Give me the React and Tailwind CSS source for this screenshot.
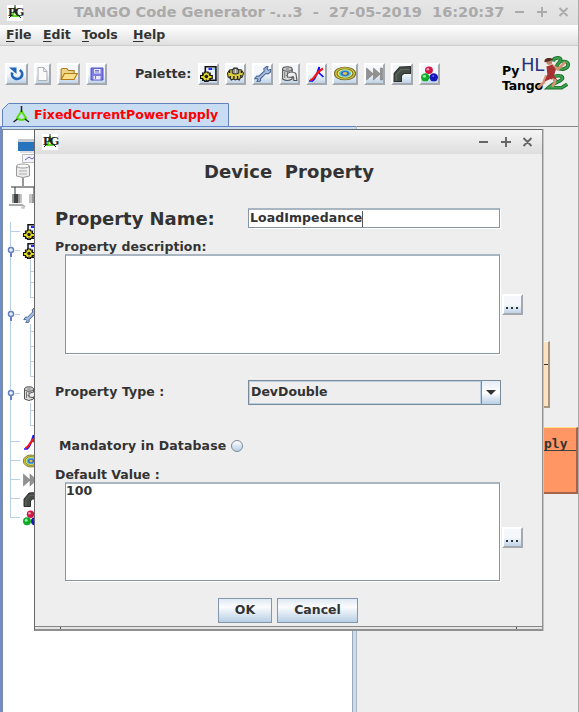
import React from "react";

const font = "font-['DejaVu_Sans','Verdana',sans-serif] font-bold";

function Gear({ x, y, s = 1 }) {
  return (
    <g transform={`translate(${x} ${y}) scale(${s})`}>
      <path d="M-5.5-1h2v-2.5h2v-1h3v1h2v2.500h2v3h-2v2h-2v1h-3v-1h-2v-2h-2z" fill="#e8dc28" stroke="#111" strokeWidth="1.200" />
      <path d="M-3 4.500v-2M0 5v-2M3 4v-2M-3-3v2M3-3v2" stroke="#222" strokeWidth="1.300" />
      <circle r="1.700" fill="#222" />
    </g>
  );
}

const drawings = {
  refresh: (
    <>
      <path d="M11 4a4.800 4.800 0 1 1-7 2.500" fill="none" stroke="#2264b8" strokeWidth="2.600" />
      <path d="M1 1.500h7v6.500z" fill="#2264b8" />
    </>
  ),
  file: <path d="M2.500 1.500h7l4 4v9h-11zM9.500 1.500v4h4" fill="#fafafa" stroke="#aaa" />,
  folder: (
    <>
      <path d="M1 13.500v-10l1-1h4l1.500 2h5v2.500" fill="#eed488" stroke="#b07b18" />
      <path d="M1 13.500l3-6h11.500l-3 6z" fill="#f9df87" stroke="#b07b18" />
    </>
  ),
  save: (
    <>
      <path d="M2 2h12v12H2z" fill="#7b7be0" stroke="#5252c0" />
      <path d="M5 3h6.500v4.500H5zM4.500 10h7v3.500h-7z" fill="#e9e9ff" />
      <path d="M6 4.500h4M6 6h4M6.500 10v3" stroke="#7777c8" />
    </>
  ),
  class: (
    <>
      <path d="M5 .8h10v13.500H5z" fill="#e9f0ff" stroke="#111" strokeWidth="1.500" />
      <path d="M8 3h3.500" stroke="#11f" strokeWidth="1.800" />
      <path d="M12.500 3h1.500" stroke="#0bb" />
      <Gear x={6} y={10.5} />
    </>
  ),
  gear: (
    <>
      <path d="M.5 7l2-3 3-.5 1-1.500h3l1 1.500 3 .5 2 3-1 4-2 1-1 2-2-1-1.500 1-2-1-2 1-1-2-2-1z" fill="#d9ca3e" stroke="#222" />
      <path d="M3 10v2.500M6.500 10v3M10 10v3M13 9v2.500M2.500 5v2M13.500 5v2" stroke="#222" strokeWidth="1.300" />
      <path d="M5 7V4q3-3 6 0v3q-3 2-6 0z" fill="#999" stroke="#333" />
      <path d="M8 3v4" stroke="#ddd" />
    </>
  ),
  wrench: (
    <path d="M.7 12.700l2-2.700 1.800.200L9.700 5l-.5-2.200L11.800.5l1.400.2-1 2.300 1.100 1.200L15.600 3.500v2.500l-2.300 2-2.100-.5L6 12.800l.2 2L4 16l-1.200-.5 1-2-1-1z" fill="#a3bce4" stroke="#4a668f" />
  ),
  cylinder: (
    <>
      <path d="M1.500 3v10q4.500 3 9 0V3" fill="#ddd" stroke="#555" />
      <ellipse cx="6" cy="3" rx="4.500" ry="2.200" fill="#ccc" stroke="#555" />
      <path d="M6 7.500q4.500-3 8 0l1 7h-3v-3q-1-2-2 0l-4-.5z" fill="#eee" stroke="#555" />
      <path d="M3.500 6v6M6 5.500v2M4.500 3h3M4.500 9.500h2" stroke="#777" />
    </>
  ),
  curve: (
    <>
      <path d="M1 15h3c4-3 5-10 6.500-14v6l4 4" fill="none" stroke="#11f" strokeWidth="1.700" />
      <path d="M2 14c2 0 3.500-2 5-4.500S10 5 14 2.500" fill="none" stroke="#f01818" strokeWidth="2.200" />
    </>
  ),
  rings: (
    <>
      <ellipse cx="8" cy="8" rx="7.700" ry="6" fill="#d6ca3c" stroke="#77722c" strokeWidth=".9" />
      <ellipse cx="8" cy="8" rx="5.800" ry="4.400" fill="#f1e86a" stroke="#77722c" strokeWidth=".8" />
      <ellipse cx="8" cy="8" rx="4.400" ry="3.300" fill="#48c5d5" />
      <ellipse cx="8" cy="8" rx="3" ry="2.300" fill="#3c63d5" />
      <ellipse cx="8" cy="8" rx="1.600" ry="1.300" fill="#d8c838" />
    </>
  ),
  forward: (
    <path d="M.5 2v12L7 8zM7 2v12L13.500 8zM13.500 2h2v12h-2z" fill="#929292" stroke="#7c7c7c" strokeWidth=".6" />
  ),
  pipe: (
    <>
      <path d="M1 15.500V8l5-6 9.500-.5v6.500H9.500L7.500 10v5.500z" fill="#454b45" stroke="#2c302c" />
      <path d="M3 15V9l4-4.500 8-.5" fill="none" stroke="#606660" />
    </>
  ),
  balls: (
    <>
      <circle cx="7.500" cy="4.200" r="3.700" fill="#d01848" />
      <circle cx="6.500" cy="3.200" r="1.300" fill="#f5a0b5" />
      <circle cx="4" cy="11.300" r="4" fill="#12a82a" />
      <circle cx="3.200" cy="10.200" r="1.500" fill="#8bf09a" />
      <circle cx="12" cy="11.300" r="4" fill="#1418b8" />
      <circle cx="11.500" cy="10" r="1" fill="#6868f0" />
    </>
  ),
};

function Icon({ name, className = "h-4 w-4" }) {
  return (
    <svg viewBox="0 0 16 16" preserveAspectRatio="none" className={`shrink-0 ${className}`}>
      {drawings[name]}
    </svg>
  );
}

const raised =
  "flex shrink-0 items-center justify-center border-2 border-t-white border-l-white border-r-[#a5a9ad] border-b-[#a5a9ad] bg-linear-to-b from-[#f4f8fc] via-[#f4f8fc] to-[#bfd3e8]";

function ToolButton({ name, className, icon = "h-4 w-[17px]" }) {
  return (
    <button className={`${raised} h-[22px] ${className}`}>
      <Icon name={name} className={icon} />
    </button>
  );
}

function AppIcon() {
  return (
    <div className="relative flex h-4 w-4 shrink-0 items-center justify-center bg-white">
      <svg viewBox="0 0 16 16" className="absolute inset-0">
        <path d="M8 2v3M5 11l3-6 3 6z" fill="none" stroke="#58dc20" strokeWidth="2.200" />
        <path d="M8 0v4M2 13l3-3M11 10l3 3" stroke="#222" />
      </svg>
      <span className="relative font-['DejaVu_Serif',serif] text-[11.500px] leading-none font-bold tracking-[-2px] text-[#222]">PG</span>
    </div>
  );
}

function WindowControls({ color }) {
  return (
    <svg viewBox="0 0 60 14" className="h-[14px] w-[60px] shrink-0" fill="none" stroke={color} strokeWidth="1.900">
      <path d="M4 7h9M26 7h10M31 2v10M48.500 3l8 8M56.500 3l-8 8" />
    </svg>
  );
}

function MenuItem({ label, className }) {
  return (
    <span className={`shrink-0 ${className}`}>
      <span className="underline underline-offset-2">{label[0]}</span>
      {label.slice(1)}
    </span>
  );
}

function TreeHandle() {
  return (
    <svg viewBox="0 0 8 12" className="-ml-[4px] h-3 w-2 shrink-0">
      <path d="M4 6v6" stroke="#6382bf" strokeWidth="2" />
      <circle cx="4" cy="5" r="2.500" fill="#eef4fb" stroke="#6382bf" strokeWidth="1.500" />
    </svg>
  );
}

function TreeRow({ name, handle }) {
  return (
    <div className="flex h-[19px] shrink-0 items-center">
      {handle ? <TreeHandle /> : <span className="h-px w-[4px] shrink-0 bg-[#b8cfe5]" />}
      <span className="h-px w-[5px] shrink-0 bg-[#b8cfe5]" />
      <Icon name={name} className="ml-[3px] h-4 w-4" />
    </div>
  );
}

function Branch({ rows, className }) {
  return (
    <div className={`flex flex-col pl-[19px] ${className}`}>
      {rows.map((h, i) => (
        <div key={i} className={`${h} w-4 shrink-0 border-b border-l border-[#b8cfe5]`} />
      ))}
    </div>
  );
}

function RootDrawing() {
  return (
    <svg viewBox="0 0 34 76" className="h-[76px] w-[34px]">
      <path d="M15 1h19v12H15z" fill="#2873bd" />
      <path d="M15 1h19v3H15z" fill="#c4c8d0" />
      <path d="M17 13h17v2H17z" fill="#ddd" />
      <path d="M19.500 16.500h14v8h-14z" fill="#f3f4ff" stroke="#bbb" />
      <path d="M22 22l4-3 3 2 4-3" fill="none" stroke="#5967b0" />
      <path d="M20 40v8M8 49h26M12 49v7M31 49v7" stroke="#333" />
      <path d="M13.500 28v10q6.500 3 13 0V28" fill="#eee" stroke="#999" />
      <ellipse cx="20" cy="28" rx="6.500" ry="2" fill="#fafafa" stroke="#999" />
      <path d="M16 33h8M16 36h8" stroke="#aaa" />
      <path d="M9 56h8v9H9zM28 56h6v9h-6z" fill="#999" />
      <path d="M11 56h4v9h-4z" fill="#444" />
      <path d="M17 56h2v9h-2zM26 56h3v9h-3z" fill="#c4c4c4" />
      <path d="M6 67h13l3 2" fill="none" stroke="#aaa" strokeWidth="2" />
      <ellipse cx="20" cy="69.500" rx="2" ry="1.500" fill="#ccc" />
    </svg>
  );
}

function Logo() {
  return (
    <div className="relative h-[42px] w-[76px]">
      <div className="absolute top-[10px] left-px text-[12.500px] leading-[15px] font-bold tracking-[-0.200px] text-black">
        Py<br />Tango
      </div>
      <span className="absolute top-[2px] left-[20px] text-[18px] leading-[20px] font-normal tracking-[-0.300px] text-[#26327c]">HL</span>
      <svg viewBox="0 0 36 42" preserveAspectRatio="none" className="absolute top-[3px] left-[36px] h-[37px] w-[34px]" fill="none">
        <path d="M17 6c1-5 9-5 8-1-1 3-6 5-3 8 4 4 11 1 11-3 0-4-5-5-7-2M14 25c5-3 13-4 13 0s-8 4-15 11h14l6-4" stroke="#1f6e2e" strokeWidth="4" />
        <path d="M17 6c1-5 9-5 8-1-1 3-6 5-3 8 4 4 11 1 11-3 0-4-5-5-7-2M14 25c5-3 13-4 13 0s-8 4-15 11h14l6-4" stroke="#38a34a" strokeWidth="2" />
        <path d="M15 10l7 5 8-8M10 22l-3 8-6 6M17 23l2 7-3 5" stroke="#d79275" strokeWidth="3" />
        <path d="M10 12l6-2 4 5-2 7 4 6-5-3-9 4 3-8z" fill="#a63032" />
        <circle cx="13" cy="7" r="3" fill="#c18268" />
        <path d="M8 7c-1-5 6-6 9-3l-4 2z" fill="#55291f" />
      </svg>
    </div>
  );
}

function TextArea({ children }) {
  return (
    <div className="w-[435px] border border-t-2 border-[#8795a3] border-t-[#a9b6c2] bg-white text-[12.500px] leading-[14px] shadow-[1px_1px_0_#fff]">
      {children}
    </div>
  );
}

function MoreButton() {
  return (
    <button className={`${raised} h-[21px] w-[21px]`}>
      <svg viewBox="0 0 17 17" className="h-[17px] w-[17px]">
        <path d="M2 11h2v2H2zM7 11h2v2H7zM12 11h2v2h-2z" fill="#333" />
      </svg>
    </button>
  );
}

const pushButton =
  "flex h-[25px] items-center justify-center border border-[#8297ac] bg-linear-to-b from-[#dfe9f3] via-[#fbfcfe] via-35% to-[#b8cfe5] text-[12.500px]";

function Dialog() {
  return (
    <div className="absolute top-[129px] left-[34px] flex h-[502px] w-[509px] flex-col border border-b-2 border-[#666] border-r-[#909090] border-b-[#909090] bg-[#eee] shadow-[1px_0_0_#c4c4c4]">
      <div className="flex h-[24px] shrink-0 items-center bg-linear-to-b from-[#f5f5f5] to-[#dedede] pl-[7px]">
        <AppIcon />
        <div className="mr-[7px] ml-auto">
          <WindowControls color="#666" />
        </div>
      </div>
      <div className="flex h-[35px] shrink-0 items-center pl-[169px] text-[18px] tracking-[0.050px] whitespace-pre">Device  Property</div>
      <div className="mt-[19px] flex h-[20px] shrink-0 items-center pl-[20px]">
        <span className="w-[193px] text-[18px] tracking-[-0.050px] whitespace-nowrap">Property Name:</span>
        <div className="flex h-[20px] w-[252px] items-center border border-t-2 border-[#8795a3] border-t-[#a9b6c2] bg-white pl-px text-[12.500px] tracking-[0.080px] shadow-[1px_1px_0_#fff]">
          LoadImpedance
          <span className="h-4 w-px bg-[#555]" />
        </div>
      </div>
      <div className="mt-[11px] flex h-4 shrink-0 items-center pl-[20px] text-[12.500px] tracking-[0.050px]">Property description:</div>
      <div className="-mt-px flex h-[100px] shrink-0 items-center pl-[30px]">
        <div className="mr-[2px] flex h-full"><TextArea /></div>
        <div className="mt-px"><MoreButton /></div>
      </div>
      <div className="mt-[26px] flex h-[25px] shrink-0 items-center pl-[20px]">
        <span className="w-[193px] text-[12.500px] tracking-[0.100px]">Property Type :</span>
        <div className="flex h-[25px] w-[253px] border border-[#7a8a99]">
          <div className="flex flex-1 items-center border border-[#b8cfe5] pl-px text-[12.500px]">DevDouble</div>
          <div className="flex w-[19px] items-center justify-center border-l border-[#7a8a99] bg-linear-to-b from-[#e4edf6] via-white to-[#b8cfe5]">
            <svg viewBox="0 0 10 5" className="h-[5px] w-[10px]"><path d="M0 0h10L5 5z" fill="#333" /></svg>
          </div>
        </div>
      </div>
      <div className="mt-[32px] flex h-[18px] shrink-0 items-center pl-[24px]">
        <span className="w-[172px] text-[12.500px] tracking-[0.140px] whitespace-nowrap">Mandatory in Database</span>
        <span className="h-3 w-3 rounded-full border border-[#7a8a99] bg-linear-to-b from-white to-[#b8cfe5]" />
      </div>
      <div className="mt-[12px] flex h-4 shrink-0 items-center pl-[20px] text-[12.500px]">Default Value :</div>
      <div className="-mt-px flex h-[99px] shrink-0 items-center pl-[30px]">
        <div className="mr-[2px] flex h-full"><TextArea>100</TextArea></div>
        <div className="mt-[12px]"><MoreButton /></div>
      </div>
      <div className="mt-[17px] flex shrink-0 gap-[5px] pl-[183px]">
        <button className={`${pushButton} w-[54px]`}>OK</button>
        <button className={`${pushButton} w-[81px]`}>Cancel</button>
      </div>
      <div className="mt-auto flex h-[3px] shrink-0 border-t border-[#888] bg-[#e4e4e4]">
        <span className="ml-[25px] w-px bg-[#555]" />
        <span className="mr-[25px] ml-auto w-px bg-[#555]" />
      </div>
    </div>
  );
}

export default function App() {
  return (
    <div className={`relative flex h-[712px] w-[579px] flex-col overflow-hidden border-r border-[#aaa] bg-[#eee] text-[#333] ${font}`}>
      <header className="flex h-[25px] shrink-0 items-center bg-linear-to-b from-[#e6e6e6] to-[#dedede] pl-[7px]">
        <AppIcon />
        <span className="-mt-px ml-[51px] text-[14.560px] whitespace-pre text-[#aaa]">TANGO Code Generator -...3  -  27-05-2019  16:20:37</span>
        <div className="-mt-[2px] mr-[7px] ml-auto shrink-0">
          <WindowControls color="#aaa" />
        </div>
      </header>
      <nav className="flex h-[21px] shrink-0 items-center border-b border-[#ccc] bg-linear-to-b from-white to-[#e0e0e0] pl-[6px] text-[12.500px]">
        <MenuItem label="File" className="w-[37px]" />
        <MenuItem label="Edit" className="w-[39px]" />
        <MenuItem label="Tools" className="w-[51px]" />
        <MenuItem label="Help" className="w-[40px]" />
      </nav>
      <div className="flex h-[55px] shrink-0 items-center pl-[5px]">
        <ToolButton name="refresh" className="mr-[6px] w-[23px]" />
        <ToolButton name="file" className="mr-[6px] w-[17px]" icon="h-4 w-[13px]" />
        <ToolButton name="folder" className="mr-[6px] w-[23px]" icon="h-4 w-[18px]" />
        <ToolButton name="save" className="w-[21px]" icon="h-4 w-4" />
        <span className="ml-[28px] w-[63px] shrink-0 text-[12.700px]">Palette:</span>
        <ToolButton name="class" className="mr-[6px] w-[21px]" />
        <ToolButton name="gear" className="mr-[6px] w-[21px]" />
        <ToolButton name="wrench" className="mr-[6px] w-[21px]" />
        <ToolButton name="cylinder" className="mr-[6px] w-[21px]" />
        <ToolButton name="curve" className="mr-[5px] w-[21px]" />
        <ToolButton name="rings" className="mr-[6px] w-[26px]" icon="h-[17px] w-[22px]" />
        <ToolButton name="forward" className="mr-[6px] w-[21px]" />
        <ToolButton name="pipe" className="mr-[6px] w-[22px]" icon="h-[17px] w-[18px]" />
        <ToolButton name="balls" className="w-[21px]" />
        <div className="ml-[61px] shrink-0"><Logo /></div>
      </div>
      <div className="relative mt-[2px] ml-[2px] h-[23px] w-[227px] shrink-0">
        <svg viewBox="0 0 227 23" className="absolute inset-0">
          <path d="M.5 23V6.500l6-6h220V23" fill="#c8ddf2" stroke="#6382bf" />
        </svg>
        <div className="relative flex h-full items-center pl-[11px]">
          <svg viewBox="0 0 17 18" className="h-[18px] w-[17px]" fill="none">
            <path d="M8.500 5L4 12q4.500 4 9 0z" stroke="#58dc10" strokeWidth="2" />
            <path d="M8.500 0v6M.5 16l4-3M16 16l-4-3" stroke="#222" strokeWidth="1.500" />
          </svg>
          <span className="mt-px ml-[4px] text-[12.500px] text-[#f00]">FixedCurrentPowerSupply</span>
        </div>
      </div>
      <main className="flex min-h-0 flex-1">
        <div className="flex w-[357px] shrink-0 flex-col border-r border-l-2 border-[#aab6c2] border-l-[#6f8dcb]">
          <div className="h-[3px] shrink-0 border-t border-[#6382bf] bg-[#c8ddf2]" />
          <div className="flex min-h-0 flex-1 border-t border-r-3 border-l border-[#7a8a99] border-r-[#c8ddf2] bg-white">
            <div className="flex w-[350px] flex-col border-r border-[#9aa8b5]">
              <div className="h-[92px] shrink-0 pt-[8px]"><RootDrawing /></div>
              <div className="ml-[7px] h-[296px] w-6 shrink-0 border-l border-[#b8cfe5]">
                <TreeRow name="class" />
                <TreeRow name="class" handle />
                <Branch className="h-[45px]" rows={["h-[12px]", "h-[11px]", "h-[15px]"]} />
                <TreeRow name="wrench" handle />
                <Branch className="h-[60px]" rows={["h-[8px]", "h-[15px]", "h-[15px]", "h-[15px]"]} />
                <TreeRow name="cylinder" handle />
                <Branch className="h-[29px]" rows={["h-[8px]", "h-[15px]"]} />
                <TreeRow name="curve" />
                <TreeRow name="rings" />
                <TreeRow name="forward" />
                <TreeRow name="pipe" />
              </div>
              <div className="-mt-[10px] ml-[8px]"><TreeRow name="balls" /></div>
            </div>
          </div>
        </div>
        <div className="flex flex-1 flex-col items-end border-t border-[#888]">
          <div className="mt-[214px] mr-[28px] h-[67px] w-[10px] border-t border-r-2 border-b-2 border-[#aa957f] border-t-white bg-[#ffe2c0]">
            <div className="mt-[22px] h-px bg-[#333]" />
          </div>
          <div className="mt-[19px] h-[67px] w-[38px] border-t border-r-2 border-b-2 border-[#a5654a] border-t-[#ffe088] bg-[#ff9664] pl-[3px]">
            <div className="flex h-[23px] items-end border-b border-[#444] pl-[1px] font-['DejaVu_Sans_Mono',monospace] text-[13px] leading-[13px]">ply</div>
          </div>
        </div>
      </main>
      <Dialog />
    </div>
  );
}
